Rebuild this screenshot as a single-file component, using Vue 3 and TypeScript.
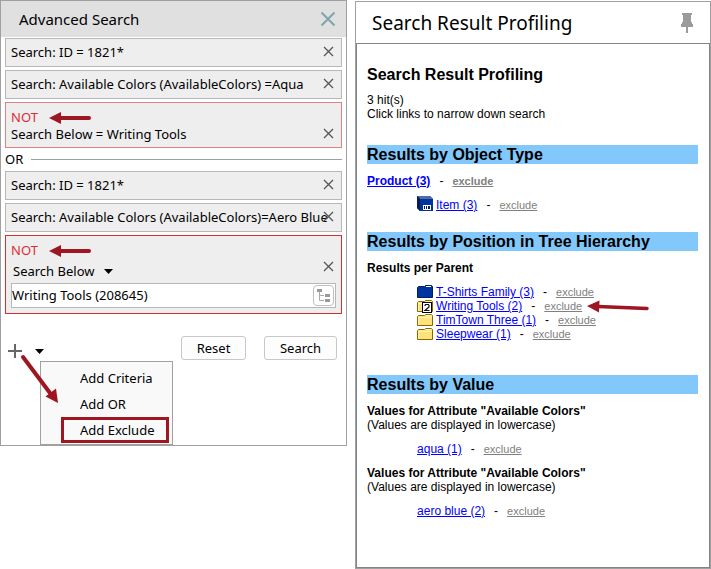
<script setup lang="ts">
import { ref } from 'vue'

interface Criterion {
  id: string
  text: string
  negated?: boolean
}

interface Hit {
  label: string
  icon?: 'item' | 'folder-blue' | 'folder-badge' | 'folder'
  pointed?: boolean
}

const firstGroup: Criterion[] = [
  { id: 'a1', text: 'Search: ID = 1821*' },
  { id: 'a2', text: 'Search: Available Colors (AvailableColors) =Aqua' },
  { id: 'a3', text: 'Search Below = Writing Tools', negated: true },
]

const secondGroup: Criterion[] = [
  { id: 'b1', text: 'Search: ID = 1821*' },
  { id: 'b2', text: 'Search: Available Colors (AvailableColors)=Aero Blue' },
]

const menuItems = ['Add Criteria', 'Add OR', 'Add Exclude']

const parents: Hit[] = [
  { label: 'T-Shirts Family (3)', icon: 'folder-blue' },
  { label: 'Writing Tools (2)', icon: 'folder-badge', pointed: true },
  { label: 'TimTown Three (1)', icon: 'folder' },
  { label: 'Sleepwear (1)', icon: 'folder' },
]

const values = ['aqua (1)', 'aero blue (2)']

const scope = ref('Search Below')
const node = ref('Writing Tools (208645)')
</script>

<template>
  <main class="layout">
    <section class="search-panel">
      <header class="panel-head">
        <h1>Advanced Search</h1>
        <button class="bare head-close" type="button" aria-label="Close panel">
          <svg width="16" height="16" viewBox="0 0 16 16"><path d="M1.500 1.500 14.500 14.500M14.500 1.500 1.500 14.500" stroke="#7fa6ad" stroke-width="2" fill="none" /></svg>
        </button>
      </header>

      <div class="criteria">
        <div v-for="c in firstGroup" :key="c.id" class="box" :class="{ soft: c.negated }">
          <div class="box-text">
            <div v-if="c.negated" class="not">
              NOT
              <svg class="not-arrow" width="42" height="14" viewBox="0 0 42 14"><path d="M11 7H40" stroke="#9e1622" stroke-width="4" stroke-linecap="round" /><path d="M0 7 12 1V13Z" fill="#9e1622" /></svg>
            </div>
            <div>{{ c.text }}</div>
          </div>
          <button class="bare close" type="button" aria-label="Remove criterion">
            <svg width="11" height="11" viewBox="0 0 11 11"><path d="M1 1 10 10M10 1 1 10" stroke="#555" stroke-width="1.300" fill="none" /></svg>
          </button>
        </div>

        <div class="or"><span>OR</span></div>

        <div v-for="c in secondGroup" :key="c.id" class="box">
          <div class="box-text">{{ c.text }}</div>
          <button class="bare close" type="button" aria-label="Remove criterion">
            <svg width="11" height="11" viewBox="0 0 11 11"><path d="M1 1 10 10M10 1 1 10" stroke="#555" stroke-width="1.300" fill="none" /></svg>
          </button>
        </div>

        <div class="box stacked strong">
          <div class="not">
            NOT
            <svg class="not-arrow" width="42" height="14" viewBox="0 0 42 14"><path d="M11 7H40" stroke="#9e1622" stroke-width="4" stroke-linecap="round" /><path d="M0 7 12 1V13Z" fill="#9e1622" /></svg>
          </div>
          <div class="scope-row">
            <select v-model="scope" aria-label="Criterion type">
              <option>Search Below</option>
            </select>
            <svg class="caret" width="9" height="5" viewBox="0 0 9 5"><path d="M0 0H9L4.500 5Z" /></svg>
            <button class="bare close" type="button" aria-label="Remove criterion">
              <svg width="11" height="11" viewBox="0 0 11 11"><path d="M1 1 10 10M10 1 1 10" stroke="#555" stroke-width="1.300" fill="none" /></svg>
            </button>
          </div>
          <div class="node-field">
            <input v-model="node" type="text" aria-label="Node" />
            <button class="tree-button" type="button" aria-label="Browse tree">
              <svg width="15" height="15" viewBox="0 0 15 15"><g fill="#999"><rect x="1" y="1" width="5" height="3" /><rect x="9" y="6" width="5" height="3" /><rect x="9" y="11" width="5" height="3" /></g><path d="M3.500 4V12.500H8M3.500 7.500H8" stroke="#aaa" fill="none" /></svg>
            </button>
          </div>
        </div>
      </div>

      <footer class="actions">
        <div class="add">
          <button class="bare add-button" type="button" aria-label="Add">
            <svg width="14" height="14" viewBox="0 0 14 14"><path d="M7 0V14M0 7H14" stroke="#666" stroke-width="2" /></svg>
            <svg class="caret" width="9" height="5" viewBox="0 0 9 5"><path d="M0 0H9L4.500 5Z" /></svg>
          </button>
          <ul class="menu">
            <li v-for="(m, i) in menuItems" :key="m">
              <button type="button" :class="{ marked: i === menuItems.length - 1 }">{{ m }}</button>
            </li>
          </ul>
          <svg class="menu-arrow" width="40" height="52" viewBox="0 0 40 52"><path d="M3 4 30 40" stroke="#9e1622" stroke-width="4" stroke-linecap="round" /><path d="M38 50 25.500 43.500 36 35.500Z" fill="#9e1622" /></svg>
        </div>
        <button class="push reset" type="button">Reset</button>
        <button class="push find" type="button">Search</button>
      </footer>
    </section>

    <section class="result-panel">
      <header class="result-head">
        <h1>Search Result Profiling</h1>
        <button class="bare" type="button" aria-label="Pin panel">
          <svg width="12" height="20" viewBox="0 0 12 20"><path d="M1 0H11V2H10V9H11V11H12V14H7V20H5V14H0V11H1V9H2V2H1Z" fill="#9b9b9b" /></svg>
        </button>
      </header>

      <div class="report">
        <h2 class="title">Search Result Profiling</h2>
        <p class="summary">3 hit(s)<br />Click links to narrow down search</p>

        <h2 class="bar">Results by Object Type</h2>
        <div class="hit strong-hit"><a href="#">Product (3)</a><span class="dash">-</span><a class="exclude" href="#">exclude</a></div>
        <div class="hit nested">
          <svg class="icon" width="16" height="16" viewBox="0 0 16 16"><path d="M0 0H13L16 3V15H3L0 12Z" fill="#002a80" /><path d="M0 0H13L16 3H3Z" fill="#506ca0" /><path d="M0 0 3 3V15L0 12Z" fill="#061c55" /><path d="M3 3H16V15H3Z" fill="#0035a0" /><path d="M6 9H14V14H6Z" fill="#fff" /><path d="M7 10H8V13H7ZM9 10H10V13H9ZM11 10H13V13H11Z" fill="#0a1d50" /></svg>
          <a href="#">Item (3)</a><span class="dash">-</span><a class="exclude" href="#">exclude</a>
        </div>

        <h2 class="bar after-item">Results by Position in Tree Hierarchy</h2>
        <h3>Results per Parent</h3>
        <ul class="hits">
          <li v-for="p in parents" :key="p.label" class="hit nested">
            <svg v-if="p.icon === 'folder-blue'" class="icon" width="16" height="14" viewBox="0 0 16 14"><path d="M.5 2.500 1.500 1.500H7.500L8.500 .5H14.500L15.500 1.500V12.500H.5Z" fill="#0033a0" stroke="#001f60" /><path d="M9 1.500H14" stroke="#fff" /></svg>
            <svg v-else class="icon" width="16" height="14" viewBox="0 0 16 14">
              <path d="M.5 3.500 1.500 2.500H7.500L8.500 1.500H14.500L15.500 2.500V12.500H.5Z" fill="#ffe27a" stroke="#8a6800" />
              <path d="M1.500 12V4.500H15M9 2.500H14" stroke="#fff3bd" fill="none" />
              <g v-if="p.icon === 'folder-badge'">
                <rect x="5.500" y="3.500" width="9" height="10" fill="#fff" stroke="#000" />
                <path d="M8 7V6.500L8.500 5.500H11.500L12 6.500V8L8 11.500H12.500" fill="none" stroke="#111" stroke-width="1.200" />
              </g>
            </svg>
            <a href="#">{{ p.label }}</a><span class="dash">-</span><a class="exclude" href="#">exclude</a>
            <svg v-if="p.pointed" class="hit-arrow" width="62" height="14" viewBox="0 0 62 14"><path d="M11 7.500 60 9.500" stroke="#9e1622" stroke-width="3.500" stroke-linecap="round" /><path d="M0 7 12.500 1.500 12 13.500Z" fill="#9e1622" /></svg>
          </li>
        </ul>

        <h2 class="bar after-list">Results by Value</h2>
        <div v-for="v in values" :key="v" class="value">
          <h3>Values for Attribute "Available Colors"</h3>
          <p>(Values are displayed in lowercase)</p>
          <div class="hit nested"><a href="#">{{ v }}</a><span class="dash">-</span><a class="exclude" href="#">exclude</a></div>
        </div>
      </div>
    </section>
  </main>
</template>

<style>
body {
  background: #fff;
}
</style>

<style scoped>
* {
  box-sizing: border-box;
}
h1, h2, h3, p, ul {
  margin: 0;
  padding: 0;
}
ul {
  list-style: none;
}
button, input, select {
  font: inherit;
  color: inherit;
}
svg {
  display: block;
  overflow: visible;
}
.bare {
  border: 0;
  padding: 0;
  background: none;
}
.layout {
  display: flex;
  align-items: flex-start;
  gap: 8px;
  color: #000;
}

/* Search panel */
.search-panel {
  flex: 347 1 0;
  min-width: 0;
  border: 1px solid #a0a0a0;
  font: 13px/17px "Noto Sans", "DejaVu Sans Condensed", sans-serif;
  padding-bottom: 79px;
}
.panel-head {
  display: flex;
  align-items: center;
  justify-content: space-between;
  height: 36px;
  padding: 0 10px 0 18px;
  background: #e0e0e0;
}
.panel-head h1 {
  font-size: 15px;
  font-weight: 400;
}
.criteria {
  display: flex;
  flex-direction: column;
  gap: 3px;
  padding: 1px 4px 0;
}
.box {
  display: flex;
  align-items: flex-end;
  padding: 5px 7px 5px 5px;
  border: 1px solid #b8b8b8;
  background: #eee;
}
.box-text {
  flex: 1;
  min-width: 0;
  white-space: nowrap;
}
.box.soft {
  padding-top: 6px;
  padding-bottom: 4px;
  border-color: #e08080;
}
.box.strong {
  display: block;
  padding: 6px 5px 5px;
  border-color: #d03030;
}
.close {
  flex: none;
  display: grid;
  place-items: center;
  width: 12px;
  height: 18px;
}
.not {
  display: flex;
  align-items: center;
  gap: 11px;
  color: #e02c36;
}
.or {
  display: flex;
  align-items: center;
  gap: 8px;
  height: 17px;
}
.or::after {
  content: "";
  flex: 1;
  border-top: 1px solid #a0a0a0;
}
.box:not(.strong) .close {
  height: 17px;
  padding-bottom: 2px;
}
.scope-row {
  display: flex;
  align-items: center;
  gap: 9px;
  height: 24px;
  padding: 0 2px;
}
.scope-row select {
  appearance: none;
  border: 0;
  padding: 0;
  background: none;
}
.scope-row .close {
  align-self: flex-start;
  height: 15px;
  margin-left: auto;
}
.node-field {
  display: flex;
  align-items: center;
  height: 25px;
  padding-right: 1px;
  border: 1px solid #b8b8b8;
  background: #fff;
}
.node-field input {
  flex: 1;
  min-width: 0;
  border: 0;
  padding: 0;
  background: none;
  outline: none;
}
.tree-button {
  display: grid;
  place-items: center;
  width: 21px;
  height: 21px;
  padding: 0;
  border: 1px solid #c0c0c0;
  border-radius: 4px;
  background: #fff;
}
.actions {
  display: flex;
  gap: 18px;
  padding: 22px 9px 0 7px;
}
.add {
  position: relative;
  margin-right: auto;
}
.add-button {
  display: flex;
  align-items: center;
  gap: 13px;
  height: 30px;
}
.push {
  height: 24px;
  padding: 0;
  border: 1px solid #c8c8c8;
  border-radius: 3px;
  background: #fdfdfd;
}
.reset {
  width: 65px;
}
.find {
  width: 73px;
}
.menu {
  position: absolute;
  left: 32px;
  top: 25px;
  width: 133px;
  padding: 3px 3px 1px 20px;
  border: 1px solid #a0a0a0;
  background: #f9f9f9;
}
.menu button {
  display: block;
  width: 100%;
  height: 26px;
  padding: 0 0 0 16px;
  border: 3px solid transparent;
  background: none;
  line-height: 20px;
  text-align: left;
  white-space: nowrap;
}
.menu .marked {
  border-color: #9e1622;
}
.menu-arrow {
  position: absolute;
  left: 12px;
  top: 17px;
}

/* Result panel */
.result-panel {
  flex: 356 1 0;
  min-width: 0;
  margin-top: 1px;
  border: 1px solid #a0a0a0;
}
.result-head {
  display: flex;
  align-items: center;
  justify-content: space-between;
  height: 41px;
  padding: 0 17px 0 16px;
}
.result-head h1 {
  font: 19px/26px "Noto Sans", "DejaVu Sans Condensed", sans-serif;
}
.report {
  padding: 21px 11px 49px 10px;
  border: 1px solid #80848c;
  font: 12px/14px "Liberation Sans", Arial, sans-serif;
}
.title, .bar {
  font-size: 16px;
  line-height: 19px;
}
.title {
  margin-bottom: 9px;
}
.summary {
  margin-bottom: 24px;
}
.bar {
  margin-bottom: 10px;
  background: #82c8fa;
}
.after-item {
  margin-top: 20px;
}
.after-list {
  margin-top: 34px;
}
.report h3 {
  font-size: 12px;
}
.hit {
  display: flex;
  height: 14px;
  white-space: nowrap;
}
.strong-hit {
  margin-bottom: 10px;
}
.strong-hit a {
  font-weight: 700;
}
.nested {
  padding-left: 50px;
}
.hits, .value .hit {
  margin-top: 10px;
}
.icon {
  flex: none;
  align-self: flex-end;
  margin-right: 3px;
}
.hit a {
  color: #00f;
}
.dash {
  margin: 0 9px;
}
.hit .exclude {
  color: #808080;
  font-size: 11px;
  line-height: 15px;
}
.hit-arrow {
  margin-left: 5px;
}
.value + .value {
  margin-top: 10px;
}
</style>
